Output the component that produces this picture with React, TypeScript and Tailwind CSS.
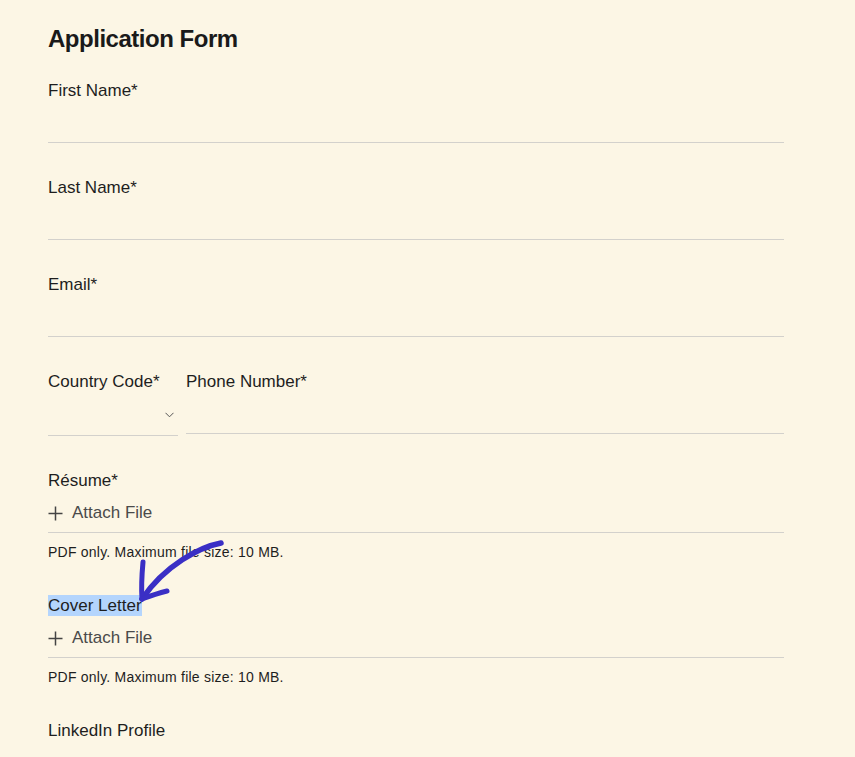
import React from "react";

function Field({ label }: { label: string }) {
  return (
    <div className="mb-8">
      <label className="block text-[17px] leading-[26px]">{label}</label>
      <input className="block w-full h-[39px] bg-transparent border-b border-[#d3d1cc] outline-none" />
    </div>
  );
}

function Plus() {
  return (
    <svg width="15" height="15" viewBox="0 0 15 15" className="shrink-0">
      <path d="M7.5 0.5V14.5M0.5 7.5H14.5" stroke="#444" strokeWidth="1.5" fill="none" />
    </svg>
  );
}

function Attach({ label, highlight }: { label: string; highlight?: boolean }) {
  return (
    <div className="mb-[31px]">
      <label className="block text-[17px] leading-[26px]">
        {highlight ? <span className="bg-[#b4d5fd] py-[1px]">{label}</span> : label}
      </label>
      <div className="flex items-center gap-[9px] h-[39px] border-b border-[#d3d1cc] text-[17px] text-[#4a4a4a]">
        <Plus />
        <span>Attach File</span>
      </div>
      <p className="mt-[9px] text-[14px] leading-5 tracking-[0.23px]">PDF only. Maximum file size: 10 MB.</p>
    </div>
  );
}

export default function App() {
  return (
    <div className="min-h-screen bg-[#fcf6e5] font-['Liberation_Sans',Arial,sans-serif] text-[#1e1e1e]">
      <div className="relative w-[736px] ml-12 pt-[23px]">
        <h1 className="text-2xl leading-8 font-bold tracking-[-0.02em] mb-[23px] text-[#1a1a1a]">
          Application Form
        </h1>
        <Field label="First Name*" />
        <Field label="Last Name*" />
        <Field label="Email*" />
        <div className="flex gap-2 mb-8 items-start">
          <div className="w-[130px] shrink-0">
            <label className="block text-[17px] leading-[26px]">Country Code*</label>
            <div className="relative h-[41px] border-b border-[#d3d1cc]">
              <svg
                width="9"
                height="6"
                viewBox="0 0 9 6"
                className="absolute right-[4px] top-[17px]"
              >
                <path d="M0.5 0.8L4.5 4.8L8.5 0.8" stroke="#555" strokeWidth="1" fill="none" />
              </svg>
            </div>
          </div>
          <div className="flex-1">
            <label className="block text-[17px] leading-[26px]">Phone Number*</label>
            <input className="block w-full h-[39px] bg-transparent border-b border-[#d3d1cc] outline-none" />
          </div>
        </div>
        <Attach label="Résume*" />
        <Attach label="Cover Letter" highlight />
        <Field label="LinkedIn Profile" />

        <svg
          className="absolute left-[72px] top-[535px] pointer-events-none"
          width="110"
          height="80"
          viewBox="0 0 110 80"
        >
          <path
            d="M101 8 C 80 12, 45 30, 22 64"
            stroke="#3a2fc5"
            strokeWidth="5.5"
            strokeLinecap="round"
            fill="none"
          />
          <path d="M22 64 C 21 50, 22 38, 23 27" stroke="#3a2fc5" strokeWidth="5" strokeLinecap="round" fill="none" />
          <path d="M22 64 C 30 61, 39 58, 47 56" stroke="#3a2fc5" strokeWidth="5" strokeLinecap="round" fill="none" />
        </svg>
      </div>
    </div>
  );
}
